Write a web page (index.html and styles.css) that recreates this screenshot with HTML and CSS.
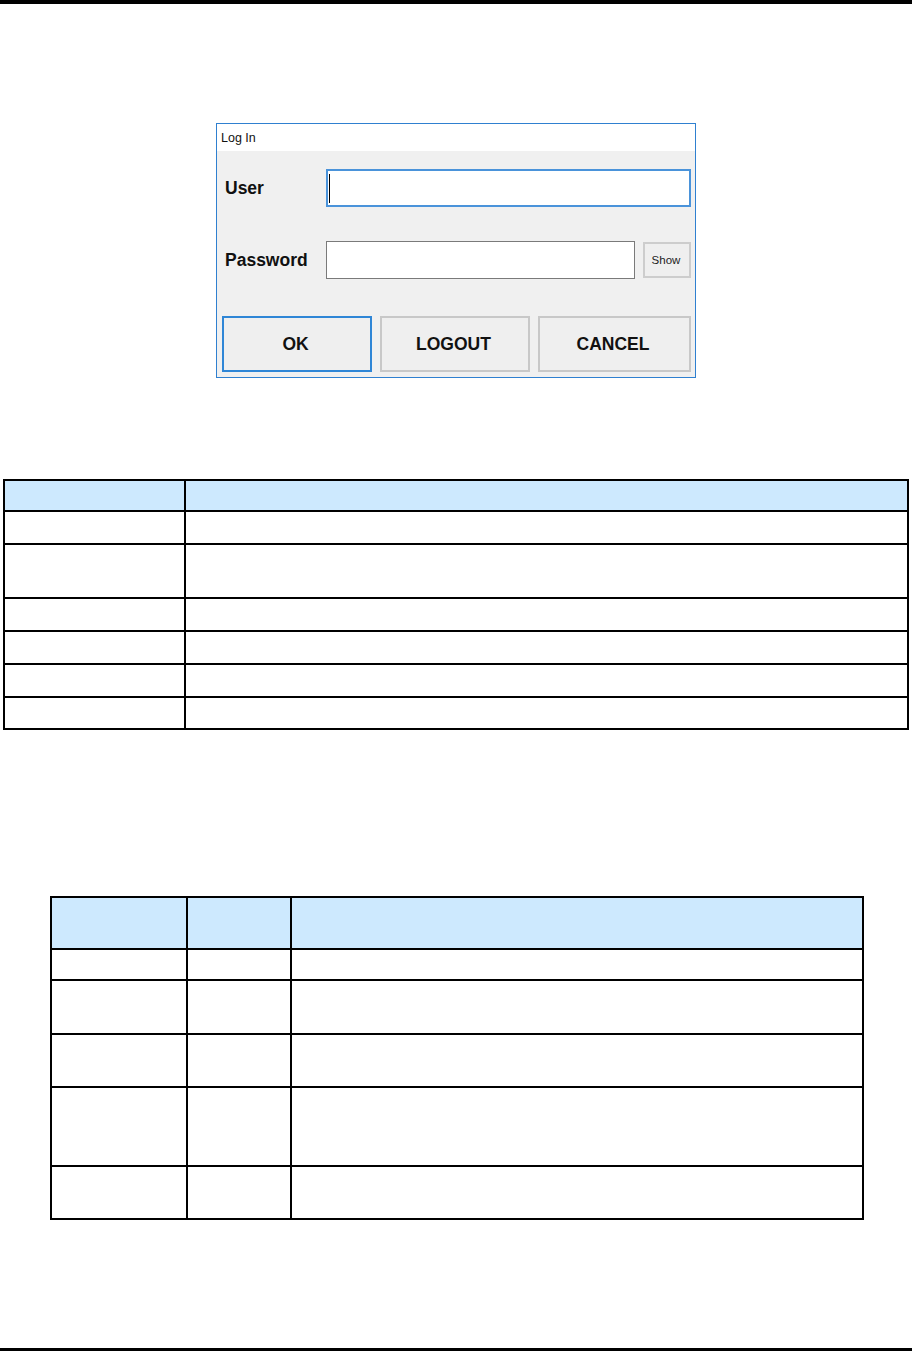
FILE: index.html
```html
<!DOCTYPE html>
<html lang="en">
<head>
<meta charset="utf-8">
<title>Log In</title>
<link rel="stylesheet" href="styles.css">
</head>
<body>
<div class="page">
  <div class="rule rule-top"></div>

  <div class="dialog">
    <div class="dialog-title">Log In</div>
    <div class="dialog-body">
      <div class="field-row">
        <span class="field-label">User</span>
        <div class="text-input text-input-focus"><span class="caret"></span></div>
      </div>
      <div class="field-row field-row-pass">
        <span class="field-label">Password</span>
        <div class="text-input text-input-pass"></div>
        <span class="btn-show">Show</span>
      </div>
      <div class="button-row">
        <span class="btn btn-default">OK</span>
        <span class="btn">LOGOUT</span>
        <span class="btn btn-wide">CANCEL</span>
      </div>
    </div>
  </div>

  <div class="grid-table table-one">
    <div class="cell head"></div><div class="cell head"></div>
    <div class="cell"></div><div class="cell"></div>
    <div class="cell"></div><div class="cell"></div>
    <div class="cell"></div><div class="cell"></div>
    <div class="cell"></div><div class="cell"></div>
    <div class="cell"></div><div class="cell"></div>
    <div class="cell"></div><div class="cell"></div>
  </div>

  <div class="grid-table table-two">
    <div class="cell head"></div><div class="cell head"></div><div class="cell head"></div>
    <div class="cell"></div><div class="cell"></div><div class="cell"></div>
    <div class="cell"></div><div class="cell"></div><div class="cell"></div>
    <div class="cell"></div><div class="cell"></div><div class="cell"></div>
    <div class="cell"></div><div class="cell"></div><div class="cell"></div>
    <div class="cell"></div><div class="cell"></div><div class="cell"></div>
  </div>

  <div class="rule rule-bottom"></div>
</div>
</body>
</html>
```

FILE: styles.css
```css
* { box-sizing: border-box; }

html, body {
  margin: 0;
  padding: 0;
  background: #ffffff;
  font-family: "Liberation Sans", Arial, sans-serif;
  color: #000;
}

.page {
  min-height: 100vh;
  display: flex;
  flex-direction: column;
}

.rule { background: #000; width: 100%; }
.rule-top { height: 4px; }
.rule-bottom { height: 3px; margin-top: auto; }

/* ---------- dialog ---------- */
.dialog {
  width: 480px;
  margin: 119px auto 0;
  border: 1px solid #2f80d0;
  background: #f0f0f0;
}

.dialog-title {
  height: 27px;
  background: #ffffff;
  font-size: 12.5px;
  line-height: 29px;
  padding-left: 4px;
  color: #111;
}

.dialog-body {
  padding: 18px 4px 5px 5px;
  display: flex;
  flex-direction: column;
}

.field-row {
  display: flex;
  align-items: center;
  height: 38px;
}

.field-row-pass { margin-top: 34px; }

.field-label {
  width: 104px;
  padding-left: 3px;
  font-weight: bold;
  font-size: 17.5px;
  color: #111;
}

.text-input {
  height: 38px;
  background: #ffffff;
  display: flex;
  align-items: center;
}

.text-input-focus {
  width: 365px;
  border: 2px solid #4a93da;
}

.caret {
  display: block;
  width: 1px;
  height: 29px;
  margin-left: 1px;
  background: #000;
}

.text-input-pass {
  width: 309px;
  border: 1px solid #7a7a7a;
}

.btn-show {
  width: 48px;
  height: 36px;
  margin-left: 8px;
  border: 2px solid #cdcdcd;
  background: #efefef;
  font-size: 11.5px;
  color: #222;
  display: flex;
  align-items: center;
  justify-content: center;
  padding-right: 2px;
}

.button-row {
  margin-top: 37px;
  display: flex;
  gap: 8px;
}

.btn {
  width: 150px;
  height: 56px;
  border: 2px solid #c8c8c8;
  background: #efefef;
  font-weight: bold;
  font-size: 17.5px;
  color: #111;
  display: flex;
  align-items: center;
  justify-content: center;
  padding-right: 3px;
}

.btn-wide { width: 153px; }

.btn-default { border-color: #2f86d6; }

/* ---------- tables ---------- */
.grid-table {
  display: grid;
  border-top: 2px solid #000;
  border-left: 2px solid #000;
}

.cell {
  border-right: 2px solid #000;
  border-bottom: 2px solid #000;
  background: #ffffff;
}

.cell.head { background: #cde9fe; }

.table-one {
  width: 906px;
  margin: 101px auto 0;
  grid-template-columns: 181px 1fr;
  grid-template-rows: 31px 33px 54px 33px 33px 33px 32px;
}

.table-two {
  width: 814px;
  margin: 166px 0 0 50px;
  grid-template-columns: 136px 104px 1fr;
  grid-template-rows: 52px 31px 54px 53px 79px 53px;
}
```
